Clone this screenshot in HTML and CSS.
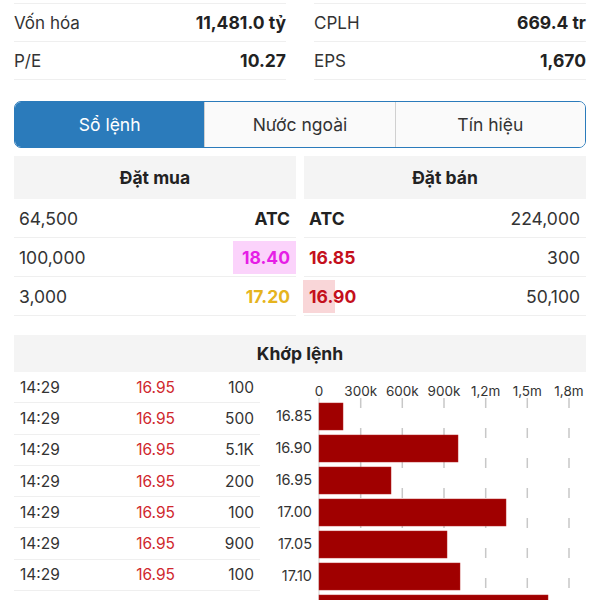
FILE: index.html
```html
<!DOCTYPE html>
<html lang="vi">
<head>
  <meta charset="UTF-8">
  <meta name="viewport" content="width=device-width, initial-scale=1.0">
  <title>Sổ lệnh</title>
  <link rel="stylesheet" href="styles.css">
</head>
<body>
  <div class="page">
    <!-- Chỉ số cơ bản -->
    <section class="stats">
      <div class="stat-col">
        <div class="stat-row"><span>Vốn hóa</span><b>11,481.0 tỷ</b></div>
        <div class="stat-row"><span>P/E</span><b>10.27</b></div>
      </div>
      <div class="stat-col">
        <div class="stat-row"><span>CPLH</span><b>669.4 tr</b></div>
        <div class="stat-row"><span>EPS</span><b>1,670</b></div>
      </div>
    </section>

    <nav class="tabs">
      <div class="tab active">Sổ lệnh</div>
      <div class="tab">Nước ngoài</div>
      <div class="tab">Tín hiệu</div>
    </nav>

    <!-- Sổ lệnh -->
    <section class="book">
      <div class="book-side buy">
        <div class="book-head">Đặt mua</div>
        <div class="book-row"><span>64,500</span><b class="atc">ATC</b></div>
        <div class="book-row">
          <span>100,000</span>
          <span class="price ceil"><i class="fill" style="width:63px"></i>18.40</span>
        </div>
        <div class="book-row"><span>3,000</span><span class="price ref">17.20</span></div>
      </div>
      <div class="book-side sell">
        <div class="book-head">Đặt bán</div>
        <div class="book-row"><b class="atc">ATC</b><span>224,000</span></div>
        <div class="book-row"><span class="price down">16.85</span><span>300</span></div>
        <div class="book-row">
          <span class="price down"><i class="fill" style="width:32px"></i>16.90</span>
          <span>50,100</span>
        </div>
      </div>
    </section>

    <!-- Khớp lệnh -->
    <div class="match-head">Khớp lệnh</div>
    <section class="match">
      <div class="trades">
        <div class="trade"><span>14:29</span><span class="down">16.95</span><span>100</span></div>
        <div class="trade"><span>14:29</span><span class="down">16.95</span><span>500</span></div>
        <div class="trade"><span>14:29</span><span class="down">16.95</span><span>5.1K</span></div>
        <div class="trade"><span>14:29</span><span class="down">16.95</span><span>200</span></div>
        <div class="trade"><span>14:29</span><span class="down">16.95</span><span>100</span></div>
        <div class="trade"><span>14:29</span><span class="down">16.95</span><span>900</span></div>
        <div class="trade"><span>14:29</span><span class="down">16.95</span><span>100</span></div>
        <div class="trade"><span>14:29</span><span class="down">16.95</span><span>300</span></div>
      </div>

      <svg class="chart" width="316" height="240" viewBox="0 0 316 240">
        <g class="axis-labels">
          <text x="49" y="24">0</text>
          <text x="90.7" y="24">300k</text>
          <text x="132.3" y="24">600k</text>
          <text x="174" y="24">900k</text>
          <text x="215.7" y="24">1,2m</text>
          <text x="257.3" y="24">1,5m</text>
          <text x="299" y="24">1,8m</text>
        </g>
        <g class="grid">
          <line x1="90.7" y1="26" x2="90.7" y2="240"/>
          <line x1="132.3" y1="26" x2="132.3" y2="240"/>
          <line x1="174" y1="26" x2="174" y2="240"/>
          <line x1="215.7" y1="26" x2="215.7" y2="240"/>
          <line x1="257.3" y1="26" x2="257.3" y2="240"/>
          <line x1="299" y1="26" x2="299" y2="240"/>
        </g>
        <line class="y-axis" x1="49" y1="26" x2="49" y2="240"/>
        <g class="bars">
          <rect x="49" y="31" width="24" height="27"/>
          <rect x="49" y="63" width="139" height="27"/>
          <rect x="49" y="95" width="72" height="27"/>
          <rect x="49" y="127" width="187" height="27"/>
          <rect x="49" y="159" width="128" height="27"/>
          <rect x="49" y="191" width="141" height="27"/>
          <rect x="49" y="223" width="229" height="27"/>
        </g>
        <g class="price-labels">
          <text x="42" y="49">16.85</text>
          <text x="42" y="81">16.90</text>
          <text x="42" y="113">16.95</text>
          <text x="42" y="145">17.00</text>
          <text x="42" y="177">17.05</text>
          <text x="42" y="209">17.10</text>
          <text x="42" y="241">17.15</text>
        </g>
      </svg>
    </section>
  </div>
</body>
</html>
```

FILE: styles.css
```css
/* Global */
body {
  margin: 0;
  font-family: Inter, "Noto Sans", sans-serif;
  color: #333;
  background: #fff;
}

.page {
  padding: 0 14px;
}

/* Chỉ số */
.stats {
  display: grid;
  grid-template-columns: 1fr 1fr;
  column-gap: 28px;
  padding-top: 3px;
}

.stat-col {
  border-top: 1px solid #efefef;
}

.stat-row {
  display: flex;
  justify-content: space-between;
  align-items: center;
  height: 37px;
  border-bottom: 1px solid #efefef;
  font-size: 17px;
}

.stat-row b {
  font-weight: 700;
  font-size: 17.5px;
  color: #222;
}

/* Tabs */
.tabs {
  display: flex;
  box-sizing: border-box;
  height: 47px;
  margin-top: 21px;
  border: 1.5px solid #2b7bbb;
  border-radius: 7px;
  overflow: hidden;
}

.tab {
  flex: 1;
  display: flex;
  align-items: center;
  justify-content: center;
  font-size: 17.5px;
  color: #333;
  background: #fafafa;
  border-left: 1px solid #d0d0d0;
}

.tab.active {
  background: #2b7bbb;
  color: #fff;
  border-left: 0;
}

/* Sổ lệnh */
.book {
  display: grid;
  grid-template-columns: 1fr 1fr;
  column-gap: 8px;
  margin-top: 8px;
}

.book-head,
.match-head {
  display: flex;
  align-items: center;
  justify-content: center;
  height: 43px;
  background: #f4f4f4;
  font-size: 17.5px;
  font-weight: 700;
  color: #222;
}

.book-row {
  display: flex;
  justify-content: space-between;
  align-items: center;
  height: 38px;
  padding: 0 6px 0 5px;
  border-bottom: 1px solid #efefef;
  font-size: 17.5px;
}

.book-row .atc {
  font-weight: 700;
  color: #222;
}

.price {
  position: relative;
  font-weight: 700;
}

.price .fill {
  position: absolute;
  top: -6px;
  bottom: -6px;
  z-index: -1;
}

.buy .price .fill {
  right: -6px;
}

.sell .price .fill {
  left: -6px;
}

.ceil {
  color: #e61ee6;
}

.ceil .fill {
  background: #fbd3fb;
}

.ref {
  color: #e6b41e;
}

.down {
  color: #c4101c;
}

.sell .down .fill {
  background: #f9d6d8;
}

/* Khớp lệnh */
.match-head {
  margin-top: 19px;
  height: 37px;
}

.match {
  display: flex;
  gap: 10px;
}

.trades {
  width: 246px;
  flex-shrink: 0;
}

.trade {
  display: grid;
  grid-template-columns: 1fr 60px 79px;
  align-items: center;
  height: 30.3px;
  padding: 0 6px;
  border-bottom: 1px solid #efefef;
  font-size: 15.5px;
}

.trade span:nth-child(2),
.trade span:nth-child(3) {
  text-align: right;
}

.trade .down {
  color: #d0282e;
}

/* Biểu đồ */
.chart {
  display: block;
  flex-shrink: 0;
  font-family: Inter, "Noto Sans", sans-serif;
}

.axis-labels text {
  font-size: 13.5px;
  fill: #333;
  text-anchor: middle;
}

.price-labels text {
  font-size: 14.5px;
  fill: #333;
  text-anchor: end;
}

.grid line {
  stroke: #c8c8c8;
  stroke-width: 1.5;
  stroke-dasharray: 10 20;
}

.y-axis {
  stroke: #d0d0d0;
  stroke-width: 1;
}

.bars rect {
  fill: #a00000;
  stroke: #b52020;
  stroke-width: 0.5;
}
```
